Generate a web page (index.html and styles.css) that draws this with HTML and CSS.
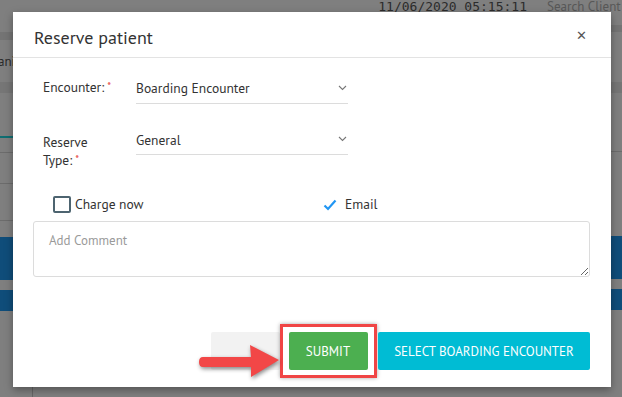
FILE: index.html
```html
<!DOCTYPE html>
<html>
<head>
<meta charset="utf-8">
<link rel="stylesheet" href="styles.css">
</head>
<body>
<div class="backdrop">
  <div class="side side-left">
    <div class="b b-top"></div>
    <div class="b b-band"></div>
    <div class="b b-text"><span>ani</span></div>
    <div class="b b-band2"></div>
    <div class="b b-gap43"></div>
    <div class="b b-teal"></div>
    <div class="b b-gap14"></div>
    <div class="b b-line"></div>
    <div class="b b-gap30"></div>
    <div class="b b-line"></div>
    <div class="b b-gap36"></div>
    <div class="b b-line"></div>
    <div class="b b-gap16"></div>
    <div class="b b-blue1"></div>
    <div class="b b-gap10"></div>
    <div class="b b-blue2"></div>
    <div class="b b-rest"></div>
  </div>
  <div class="side side-mid">
    <div class="topbar">
      <span class="clock">11/06/2020 05:15:11</span>
      <span class="search">Search Client</span>
    </div>
    <div class="mid-bottom"><div class="vline2"></div></div>
  </div>
  <div class="side side-right">
    <div class="b b-r0"></div>
    <div class="b b-rband"></div>
    <div class="b b-rgap50"></div>
    <div class="b b-band2"></div>
    <div class="b b-gap58"></div>
    <div class="b b-line"></div>
    <div class="b b-gap84"></div>
    <div class="b b-blue1"></div>
    <div class="b b-gap10"></div>
    <div class="b b-blue2"></div>
  </div>
</div>

<div class="modal">
  <div class="modal-header">
    <h2 class="title">Reserve patient</h2>
    <span class="close">&#x2715;</span>
  </div>
  <div class="modal-body">
    <div class="field">
      <label class="label">Encounter:<span class="req">*</span></label>
      <div class="select">
        <span>Boarding Encounter</span>
        <svg class="chev" width="9" height="6" viewBox="0 0 9 6"><path d="M1 1 L4.5 4.5 L8 1" fill="none" stroke="#777" stroke-width="1.1"/></svg>
      </div>
    </div>
    <div class="field field2">
      <label class="label">Reserve Type:<span class="req">*</span></label>
      <div class="select">
        <span>General</span>
        <svg class="chev" width="9" height="6" viewBox="0 0 9 6"><path d="M1 1 L4.5 4.5 L8 1" fill="none" stroke="#777" stroke-width="1.1"/></svg>
      </div>
    </div>
    <div class="checks">
      <div class="check check-a"><span class="box"></span><span>Charge now</span></div>
      <div class="check check-b">
        <svg class="tick" width="14" height="12" viewBox="0 0 14 12"><path d="M1.5 6.5 L5 10 L12.5 1.5" fill="none" stroke="#2196f3" stroke-width="2.2"/></svg>
        <span>Email</span>
      </div>
    </div>
    <textarea class="comment" placeholder="Add Comment"></textarea>
  </div>
  <div class="modal-footer">
    <button class="btn btn-grey"></button>
    <div class="highlight"><button class="btn btn-green">SUBMIT</button></div>
    <button class="btn btn-cyan">SELECT BOARDING ENCOUNTER</button>
  </div>
  <svg class="arrow" width="92" height="44" viewBox="0 0 92 44">
    <path d="M6 15 L54 15 L53 3 L82 18 L54 35 L54 25 L6 25 Q2 25 2 20 Q2 15 6 15 Z" fill="#f24747"/>
  </svg>
</div>
</body>
</html>
```
FILE: styles.css
```css
* { box-sizing: border-box; }
html, body { margin: 0; padding: 0; }
body {
  width: 622px;
  height: 397px;
  overflow: hidden;
  background: #7f7f7f;
  font-family: "PT Sans", Lato, "Open Sans", sans-serif;
  position: relative;
}
.backdrop {
  display: flex;
  height: 397px;
}
.side { display: flex; flex-direction: column; }
.side-left { width: 13px; }
.side-right { width: 11px; }
.side-mid { flex: 1; }
.b { flex: none; }
.b-top { height: 32px; }
.b-band { height: 8px; background: #747474; }
.b-text { height: 42px; overflow: hidden; }
.b-text span {
  display: block;
  margin-top: 13px;
  margin-left: -2px;
  font-size: 13px;
  color: #2a2a2a;
  white-space: nowrap;
}
.b-band2 { height: 11px; background: #767676; }
.b-gap43 { height: 43px; }
.b-teal { height: 2px; background: #0f6e72; }
.b-gap14 { height: 14px; }
.b-line { height: 1px; background: #6c6c6c; }
.b-gap30 { height: 30px; }
.b-gap36 { height: 36px; }
.b-gap16 { height: 16px; }
.b-blue1 { height: 43px; background: #0f4d7a; }
.b-gap10 { height: 10px; }
.b-blue2 { height: 21px; background: #0f4d7a; }
.b-rest { flex: 1; }

.b-r0 { height: 25px; }
.b-rband { height: 7px; background: #747474; }
.b-rgap50 { height: 50px; }
.b-gap58 { height: 58px; }
.b-gap84 { height: 84px; }

.topbar {
  height: 12px;
  display: flex;
  justify-content: flex-end;
  align-items: flex-end;
  gap: 20px;
  margin-right: -11px;
  overflow: hidden;
  white-space: nowrap;
}
.clock {
  font-family: "DejaVu Sans Mono", "Liberation Mono", monospace;
  font-size: 13px;
  line-height: 13px;
  margin-bottom: -1px;
  color: #2c2c2c;
}
.search {
  font-size: 13px;
  line-height: 13px;
  margin-bottom: -1px;
  color: #585858;
  width: 75px;
  overflow: hidden;
}
.mid-bottom { flex: 1; position: relative; }
.vline2 {
  position: absolute;
  left: 19px;
  bottom: 0;
  width: 1px;
  height: 10px;
  background: #666;
}

.modal {
  position: absolute;
  left: 13px;
  top: 12px;
  width: 598px;
  height: 375px;
  background: #fff;
  box-shadow: 0 3px 8px rgba(0,0,0,0.35);
  display: flex;
  flex-direction: column;
}
.modal-header {
  height: 46px;
  border-bottom: 1px solid #e3e3e3;
  display: flex;
  align-items: center;
  justify-content: space-between;
  padding: 0 24px 0 21px;
}
.title {
  margin: 0;
  font-size: 18px;
  font-weight: normal;
  color: #333;
  position: relative;
  top: 3px;
}
.close {
  font-size: 13px;
  color: #555;
  position: relative;
  top: 1px;
}
.modal-body {
  padding: 15px 21px 0 20px;
  display: flex;
  flex-direction: column;
}
.field {
  display: flex;
  padding-left: 10px;
  font-size: 13.5px;
  color: #333;
}
.label {
  width: 93px;
  flex: none;
  padding-top: 5px;
  line-height: 18px;
}
.field2 .label { padding-right: 22px; padding-top: 8px; }
.req { color: #e53935; font-size: 11px; margin-left: 3px; vertical-align: top; position: relative; top: -1px; }
.select {
  width: 212px;
  height: 31px;
  border-bottom: 1px solid #dcdcdc;
  display: flex;
  align-items: center;
  justify-content: space-between;
  padding-right: 1px;
  color: #333;
}
.field2 { margin-top: 21px; }
.field2 .select { height: 30px; align-items: flex-start; padding-top: 6px; }
.field2 .chev { margin-top: 5px; }

.checks {
  display: flex;
  margin-top: 26px;
  font-size: 13.5px;
  color: #333;
}
.check { display: flex; align-items: center; }
.check-a { margin-left: 20px; width: 270px; }
.box {
  width: 18px;
  height: 17px;
  border: 2px solid #4d6470;
  border-radius: 2px;
  margin-right: 4px;
}
.tick { margin-right: 8px; position: relative; top: 1px; }
.comment {
  margin-top: 8px;
  width: 557px;
  height: 56px;
  border: 1px solid #dcdcdc;
  border-radius: 3px;
  padding: 10px 15px;
  font-family: inherit;
  font-size: 13px;
  resize: vertical;
}
.comment::placeholder { color: #9a9a9a; }

.modal-footer {
  margin-top: auto;
  display: flex;
  justify-content: flex-end;
  align-items: center;
  padding: 0 21px 9px 0;
}
.btn {
  border: none;
  height: 38px;
  border-radius: 2px;
  font-family: inherit;
  font-size: 13px;
  color: #fff;
  padding: 0;
}
.btn-grey { width: 69px; background: #f2f2f2; }
.highlight {
  width: 97px;
  height: 54px;
  border: 3px solid #f04545;
  box-shadow: 0 0 4px rgba(0,0,0,0.35);
  display: flex;
  align-items: center;
  justify-content: center;
  margin-right: 1px;
}
.btn-green { width: 79px; background: #4caf50; margin-left: -1px; }
.btn-cyan { width: 212px; background: #00bcd4; }
.arrow {
  position: absolute;
  left: 184px;
  top: 330px;
  filter: drop-shadow(1px 2px 2px rgba(0,0,0,0.45));
}
```
